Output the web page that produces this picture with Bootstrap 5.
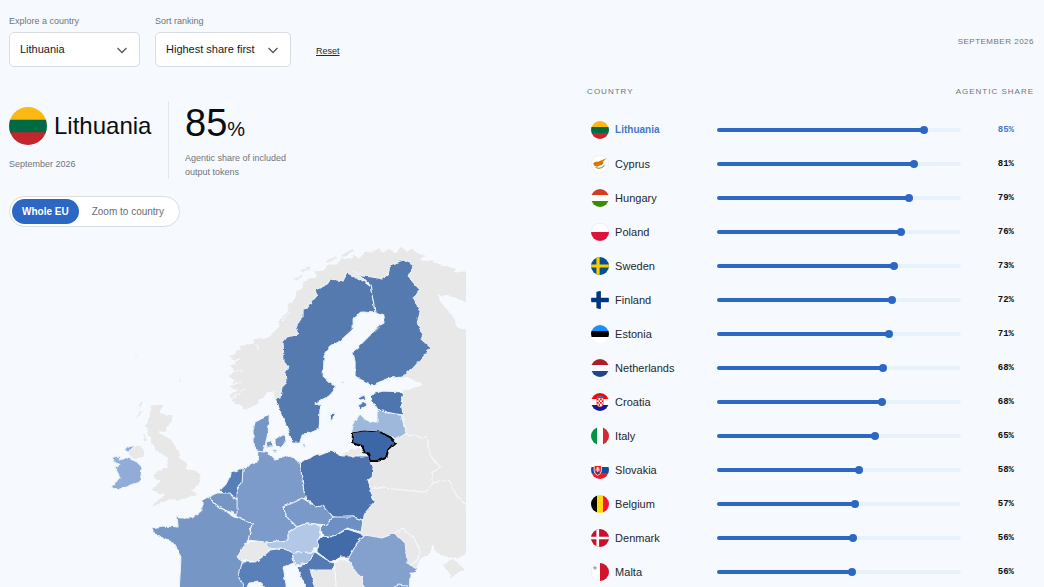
<!DOCTYPE html>
<html lang="en">
<head>
<meta charset="utf-8">
<meta name="viewport" content="width=device-width, initial-scale=1">
<title>Agentic share by country</title>
<link href="https://cdn.jsdelivr.net/npm/bootstrap@5.3.0/dist/css/bootstrap.min.css" rel="stylesheet">
<style>
body{background:#f6faff;color:#0b0d12;font-family:"Liberation Sans",Arial,sans-serif;font-size:11px;line-height:14px}
.page{padding:15px 10px 0 9px}
.explore{width:44.6%}
.ranking{width:43.6%;padding-top:21px}
.muted{color:#717478;font-size:9px}
.fields{gap:15px}
.field-label{line-height:12px;margin-bottom:5px}
.pick{height:35px;font-size:11px;color:#15181d;border-color:#d9dce2;border-radius:5px;padding:0 30px 0 10px;background-color:#fff;background-position:right 10px center;background-size:14px 14px;background-image:url("data:image/svg+xml,%3csvg xmlns='http://www.w3.org/2000/svg' viewBox='0 0 14 14'%3e%3cpath fill='none' stroke='%23555a61' stroke-width='1.300' d='M2.500 5l4.500 4.500L11.500 5'/%3e%3c/svg%3e")}
.pick-country{width:131px}
.pick-sort{width:136px}
.reset{color:#25282d;font-size:9px;margin:20px 0 0 10px}
.summary{margin-top:34px}
.summary-name{width:160px;height:78px;border-right:1px solid #e2e6ed}
.summary-name h1{font-size:24px;line-height:38px;font-weight:400}
.flag-lg{width:38px;height:38px}
.summary-title{gap:7px;padding-top:6px}
.summary-share{height:78px;padding-left:16px}
.big{font-size:38px;line-height:44px;margin-bottom:6px}
.big{margin-bottom:6px}
.summary-share .big{margin-bottom:6px;line-height:44px}
.big small{font-size:20px}
.toggle{margin-top:17px;padding:2px;height:31px;border:1px solid #d9dce2;border-radius:16px;background:#fff}
.toggle .btn{font-size:10px;line-height:13px;border:0;border-radius:13px;padding:6px 13px;color:#686d74}
.toggle .btn.active{background:#2d67c4;color:#fff;font-weight:700;padding:6px 10px}
.map{display:block;width:100%;margin-top:13px}
.land{fill:#e8e8e8;stroke:#f6faff;stroke-width:1;stroke-linejoin:round}
.eu{stroke:#eaf2fc;stroke-width:1;stroke-linejoin:round}
.caps{font-size:8px;line-height:12px;color:#717478;text-transform:uppercase;font-weight:400}
.period{letter-spacing:.5px}
.ranks .caps{letter-spacing:1px}
.ranks{margin-top:38px;table-layout:fixed;width:100%}
.ranks th,.ranks td{padding:0}
.ranks thead tr{height:27px;vertical-align:top}
.ranks tbody tr{height:34px;vertical-align:middle}
.ranks tbody th{font-weight:400;color:#24272c}
.c-name{width:130px}
.c-share{width:73px}
.flag{width:18px;height:18px;margin:0 6px 0 4px}
.track{height:4px;background:#e8f2fd;border-radius:2px}
.fill{height:4px;background:#2d67c4;border-radius:2px;position:relative}
.fill::after{content:"";position:absolute;right:-4px;top:-2px;width:8px;height:8px;border-radius:50%;background:#2d67c4}
.ranks .share{font:700 9px/12px "Liberation Mono",monospace;text-align:right;padding-right:20px}
.ranks .chosen th,.ranks .chosen td{color:#4377cc}
.ranks .chosen th{font-weight:700;font-size:10px}
</style>
</head>
<body>
<svg width="0" height="0" class="position-absolute" aria-hidden="true">
<defs>
<clipPath id="round"><circle cx="10" cy="10" r="10"/></clipPath>
<symbol id="lt" viewBox="0 0 20 20"><g clip-path="url(#round)"><path fill="#fdb913" d="M0 0h20v7H0z"/><path fill="#006a44" d="M0 6.7h20v7H0z"/><path fill="#c1272d" d="M0 13.3h20V20H0z"/></g></symbol>
<symbol id="cy" viewBox="0 0 20 20"><circle cx="10" cy="10" r="9.7" fill="#fff" stroke="#e6e8eb" stroke-width=".6"/><path fill="#d57800" d="M2.500 9.500l2-2 3.500 0 3-1.500L17.500 3.500l-4.500 4.200 1 1.300-2 2.200-3 .8-2 1-3.500-1z"/><path d="M5 13.500q5 3.500 10-2" fill="none" stroke="#8d9a72" stroke-width="1.200"/></symbol>
<symbol id="hu" viewBox="0 0 20 20"><g clip-path="url(#round)"><path fill="#fff" d="M0 0h20v20H0z"/><path fill="#d43c1e" d="M0 0h20v6.700H0z"/><path fill="#388e00" d="M0 13.300h20V20H0z"/></g></symbol>
<symbol id="pl" viewBox="0 0 20 20"><circle cx="10" cy="10" r="9.700" fill="#fff" stroke="#e2e4e8" stroke-width=".6"/><path fill="#dc143c" d="M0 10h20a10 10 0 0 1-20 0z"/></symbol>
<symbol id="se" viewBox="0 0 20 20"><g clip-path="url(#round)"><path fill="#005293" d="M0 0h20v20H0z"/><path fill="#fecb00" d="M6 0h3.600v8.200H20v3.600H9.600V20H6v-8.200H0V8.200h6z"/></g></symbol>
<symbol id="fi" viewBox="0 0 20 20"><g clip-path="url(#round)"><path fill="#fff" d="M0 0h20v20H0z"/><path fill="#003580" d="M6 0h5v7.500h9v5h-9V20H6v-7.500H0v-5h6z"/></g></symbol>
<symbol id="ee" viewBox="0 0 20 20"><g clip-path="url(#round)"><path fill="#fff" d="M0 0h20v20H0z"/><path fill="#1791ff" d="M0 0h20v6.700H0z"/><path d="M0 6.700h20v6.600H0z"/></g></symbol>
<symbol id="nl" viewBox="0 0 20 20"><g clip-path="url(#round)"><path fill="#fff" d="M0 0h20v20H0z"/><path fill="#ae1c28" d="M0 0h20v6.700H0z"/><path fill="#21468b" d="M0 13.300h20V20H0z"/></g></symbol>
<symbol id="hr" viewBox="0 0 20 20"><g clip-path="url(#round)"><path fill="#fff" d="M0 0h20v20H0z"/><path fill="#f00" d="M0 0h20v6.700H0z"/><path fill="#171796" d="M0 13.300h20V20H0z"/></g><path fill="#fff" stroke="#e33" stroke-width=".7" d="M6.500 5.500h7V12q0 3-3.500 3.500Q6.500 15 6.500 12z"/><path fill="#e22" d="M6.500 6h2v2h-2zm3.500 0h2v2h-2zM8.500 8H10v2H8.500zM12 8h1.500v2H12zm-5.500 2h2v2h-2zm3.500 0h2v2h-2zm-1.500 2H10v2.500H8.500zM12 12h1.500v1.500H12z"/><path fill="#3a6fc0" d="M6 5l1-2 1.500 1L10 2.500 11.500 4 13 3l1 2z"/></symbol>
<symbol id="it" viewBox="0 0 20 20"><g clip-path="url(#round)"><path fill="#fff" d="M0 0h20v20H0z"/><path fill="#009246" d="M0 0h6.700v20H0z"/><path fill="#ce2b37" d="M13.300 0H20v20h-6.700z"/></g></symbol>
<symbol id="sk" viewBox="0 0 20 20"><g clip-path="url(#round)"><path fill="#fff" d="M0 0h20v20H0z"/><path fill="#0b4ea2" d="M0 6.700h20v6.600H0z"/><path fill="#ee1c25" d="M0 13.300h20V20H0z"/></g><path fill="#ee1c25" stroke="#fff" stroke-width=".9" d="M3.500 5h8v6q0 3-4 5-4-2-4-5z"/><path d="M7.500 6.500v6M5.800 8h3.400M5 10h5" stroke="#fff" stroke-width="1"/><path fill="#0b4ea2" d="M5 13.500q2.500-2.500 5 0L7.500 15z"/></symbol>
<symbol id="be" viewBox="0 0 20 20"><g clip-path="url(#round)"><path d="M0 0h6.700v20H0z"/><path fill="#ffd90c" d="M6.700 0h6.600v20H6.700z"/><path fill="#f31830" d="M13.300 0H20v20h-6.700z"/></g></symbol>
<symbol id="dk" viewBox="0 0 20 20"><g clip-path="url(#round)"><path fill="#c8102e" d="M0 0h20v20H0z"/><path fill="#fff" d="M6 0h3v8.500h11v3H9V20H6v-8.500H0v-3h6z"/></g></symbol>
<symbol id="mt" viewBox="0 0 20 20"><circle cx="10" cy="10" r="9.700" fill="#fff" stroke="#e2e4e8" stroke-width=".6"/><path fill="#cf142b" d="M10 0a10 10 0 0 1 0 20z"/><path d="M4.500 3.500v4M2.500 5.500h4" stroke="#999" stroke-width="1.300"/></symbol>
</defs>
</svg>
<main class="page container-fluid vh-100 overflow-hidden d-flex justify-content-between align-items-start">
<section class="explore">
  <form class="fields d-flex align-items-center">
    <div><label class="muted field-label d-block" for="country">Explore a country</label>
      <select class="form-select pick pick-country" id="country"><option>Lithuania</option></select></div>
    <div><label class="muted field-label d-block" for="sort">Sort ranking</label>
      <select class="form-select pick pick-sort" id="sort"><option>Highest share first</option></select></div>
    <a class="reset" href="#reset">Reset</a>
  </form>
  <div class="summary d-flex">
    <div class="summary-name">
      <div class="summary-title d-flex align-items-center"><svg class="flag-lg flex-shrink-0"><use href="#lt"/></svg><h1 class="m-0">Lithuania</h1></div>
      <div class="muted mt-2 pt-1">September 2026</div>
    </div>
    <div class="summary-share d-flex flex-column justify-content-between"><div class="big mb-0">85<small>%</small></div><div class="muted">Agentic share of included<br>output tokens</div></div>
  </div>
  <div class="toggle d-inline-flex" role="group" aria-label="Map view">
    <button type="button" class="btn active">Whole EU</button><button type="button" class="btn">Zoom to country</button>
  </div>
  <svg class="map" viewBox="9 240 457 350" role="img" aria-label="Map of agentic share in Europe">
    <defs><filter id="coast" x="0" y="200" width="520" height="420" filterUnits="userSpaceOnUse" color-interpolation-filters="sRGB"><feTurbulence type="fractalNoise" baseFrequency=".16" numOctaves="2" seed="8"/><feDisplacementMap in="SourceGraphic" scale="4" xChannelSelector="R" yChannelSelector="G"/></filter>
    <clipPath id="frame"><path d="M9 240h457v360H9z"/></clipPath></defs>
    <g clip-path="url(#frame)"><g filter="url(#coast)">
    <g class="land">
      <path d="M228 356L240 349 238 346 253 343 252 339 268 337 278 327 277 322 287 312 287 305 295 298 296 291 303 288 302 283 310 278 317 277 313 271 323 270 329 264 337 264 340 258 350 259 353 254 360 258 364 251 373 252 378 247 383 252 390 248 395 253 401 246 407 251 412 248 416 252 427 256 420 260 432 260 440 264 456 268 455 272 480 268V303L466 303 455 298 437 295 443 304 448 311 455 319 457 327 466 330 480 332V552L466 553 460 558 447 558 435 553 434 545 430 553 420 560 417 568 405 575 380 560 350 540 355 500 370 480 369 460 377 440 400 430 403 390 408 389 422 385 408 378 403 377 420 350 405 300 400 275 360 285 340 290 300 330 290 360 288 380 284 398 275 400 273 392 267 393 257 405 245 410 232 402 230 394 236 390 229 387 233 380 228 376 235 370 228 366 234 362z"/>
      <path d="M229 362l11-2M229 371l13 0M230 385l12-3M232 398l12-8M255 344l4 6M276 326l-8 8M290 312l-7 8" fill="none"/>
      <path d="M293 279l9-3M302 272l8-5M310 270l-4-3M342 256l12-6M327 262l9-5" fill="none" style="stroke:#e8e8e8;stroke-width:2"/>
      <path d="M342 454L350 449 363 448 370 456 342 457z"/>
      <path d="M150 405L165 404 160 413 174 415 167 430 160 433 173 440 178 450 180 458 188 463 186 469 195 470 202 475 200 483 193 490 198 495 180 500 168 500 161 504 148 508 157 500 163 495 150 490 160 482 153 477 157 470 168 467 166 457 156 452 152 445 145 425 149 416z"/>
      <path d="M139 406l3-4M137 417l5-6M144 434l2 6" style="stroke:#e8e8e8;stroke-width:2"/>
      <path d="M128 455L131 448 140 445 145 451 144 457 135 459z"/>
      <path d="M442 564L453 558 466 570 458 573 452 578 447 571z"/>
      <path fill="none" d="M406 434L427 438 430 455 440 467 432 473 433 483 424 492 373 487M433 483L449 480 455 493 466 505 476 508M402 415L406 434M395 533L402 529 413 537 420 550 418 559 408 567"/>
      <path d="M310 570L333 568 335 562 346 559 354 566 362 576 366 600H320z"/><path fill="none" d="M335 565l1 30"/>
      <path d="M237 557L242 543 265 540 270 550 262 557 255 562 242 560z"/>
    </g>
    <g class="eu">
      <path fill="#557ab0" d="M275 398l5-1 2-10 4-4-1-11 3-5-4-5-1-20 4-5 11-3-3-7 7-9v-10l6-1 9-12-2-5 13-6 2-5 13 2 4-8 13 6 10 7 3 15 2 12-13-1-9 7v10l-13 12-10 6-6 9-1 20 13 12-7 8-13 7 4 3-1 23-9 4-8 1-2 9h-8l-3-10-7-17z"/>
      <path fill="#557ab0" d="M353 270l9 6 11 1 9 2 6-5 2-9 13-5 11 5-6 12 12 13-7 8 7 14-3 11 6 12-2 4 10 9-18 20-10 9-13 1-18 7-17-8v-15l-2-10 7-7 20-20 4-2v-8l-9-3-2-12-3-15z"/>
      <path fill="#557ab0" d="M330 416l4-4 1 4-4 5zM358 398l6-3 2 4-6 1zM358 405l7-3 2 3-7 4zM342 381l2 1-2 2z"/>
      <path fill="#4e75ae" d="M371 394l12-3 21 1-3 11 2 12-13-2-12-2-6-10z"/>
      <path fill="#9eb8db" d="M353 433l-1-8 8-11 8 8 9 0v-11l6-1 7 4 10 1 3 10 3 8-9 6-17-7-17-1z"/>
      <path fill="#4c73ae" d="M300 462l30-12 12 6 27 0 4 11-1 10-4 3 6 22-9 11-2 7-10-3-13 1-7-1-10-9-6-1-12-9-3-18z"/>
      <path fill="#7d9bca" d="M258 450l10 3 7 7 15-5 10 8 2 17 3 18-22 9 4 10 10 10-9 6v7l-23 2-17-2 4-17-15-6-2-20 3-9 4-8 1-12 14-6z"/>
      <path fill="#7596c6" d="M257 451l-4-8v-13l2-8 14-7v10l-2 12-4 15zM275 439l10-5 1 9-6 5-5-4zM266 442l5-1 1 6-5 0zM302 445l3 0 0 3zM271 449l6 1-1 2z"/>
      <path fill="#567fb8" d="M220 490l6-6 6-12 11-4-1 15-5 5v12l-12-5z"/>
      <path fill="#7595c5" d="M208 497l9-4 13 0 7 7v15l-17-7z"/>
      <path fill="#7696c5" d="M202 500l6-3 12 11 15 9 17 6-4 17-11 17 5 3v13l5 20h-68l2-36-8-14-20-10 0-5 10-2 15 1-1-12 3 3h12l10-8z"/>
      <path fill="#7899c9" d="M283 507l19-9 15 9 6-2 10 12-6 8-20-2-10 4-10-10z"/>
      <path fill="#6d90c4" d="M333 517h20l10 3-2 12-14-4-14 9-10-2-3-8 7-3z"/>
      <path fill="#416ba9" d="M317 552v-12l5-4 11 1 14-8 18 6-8 8-7 14-10 0-10 5z"/>
      <path fill="#b2c8e6" d="M265 543l23-3v-7l9-6 10-4 13 3v8l-3 13-7 5-18 1-9-5-15 1z"/>
      <path fill="#a8c0e2" d="M292 553l23-1-7 11-13 2z"/>
      <path fill="#5a80ba" d="M242 562l13 0 7-5 8-7 13-2 9 5 2 10-11 4 4 25h-17l-12-11-8 2-5 9-6-17z"/>
      <path fill="#557ab3" d="M297 567l11-4 7-11 15 10 5 1-2 7h-23l7 22h-9l-8-17z"/>
      <path fill="#84a0cd" d="M348 559l9-16 8-8 17 3 13-5 10 10 2 20 10 5-1 5-6 0-1 20h-44l-3-16-7-6z"/>
      <path fill="none" d="M388 590l10-5 10 1"/>
      <path fill="#91acd7" d="M113 457l7-1-1 4 9-3 7 3 7 7-2 15-23 8-6-3 9-10-5-9 6-3-7-3zM124 450l4-4 5 1-3 4z"/>
      <path fill="#3b67a9" d="M353 433l10-2 17 1 10 5 6 6-8 7-2 8-9 3h-6l-2-6-6-2 1-6-12-4z"/>
      <path fill="none" style="stroke:#000;stroke-width:2" d="M380 432l10 5 6 6-8 7-2 8-9 3h-6l-2-6-6-2 1-6-12-4 1-10"/>
      <path fill="none" style="stroke:#000;stroke-width:1" d="M353 433l10-2 17 1"/>
    </g></g></g>
    <path d="M136 356v2M180 379v3" stroke="#e5e7e9" stroke-width="1"/>
  </svg>
</section>
<section class="ranking">
  <div class="caps period text-end">September 2026</div>
  <table class="ranks">
    <colgroup><col class="c-name"><col><col class="c-share"></colgroup>
    <thead><tr><th class="caps" scope="col">Country</th><th class="caps text-end" scope="col" colspan="2">Agentic share</th></tr></thead>
    <tbody id="rows"></tbody>
  </table>
</section>
</main>
<script src="https://cdn.jsdelivr.net/npm/bootstrap@5.3.0/dist/js/bootstrap.bundle.min.js"></script>
<script>
const shares = [["lt","Lithuania",84.8],["cy","Cyprus",80.7],["hu","Hungary",78.7],["pl","Poland",75.5],["se","Sweden",72.5],["fi","Finland",71.7],["ee","Estonia",70.5],["nl","Netherlands",68.1],["hr","Croatia",67.7],["it","Italy",64.6],["sk","Slovakia",58],["be","Belgium",56.5],["dk","Denmark",55.8],["mt","Malta",55.5]];
document.getElementById("rows").innerHTML = shares.map(([code, name, share], i) => `
<tr class="${i ? "" : "chosen"}"><th scope="row"><div class="d-flex align-items-center"><svg class="flag" aria-hidden="true"><use href="#${code}"/></svg>${name}</div></th>
<td><div class="track"><div class="fill" style="width:${share}%"></div></div></td><td class="share">${Math.round(share)}%</td></tr>`).join("");
</script>
</body>
</html>
